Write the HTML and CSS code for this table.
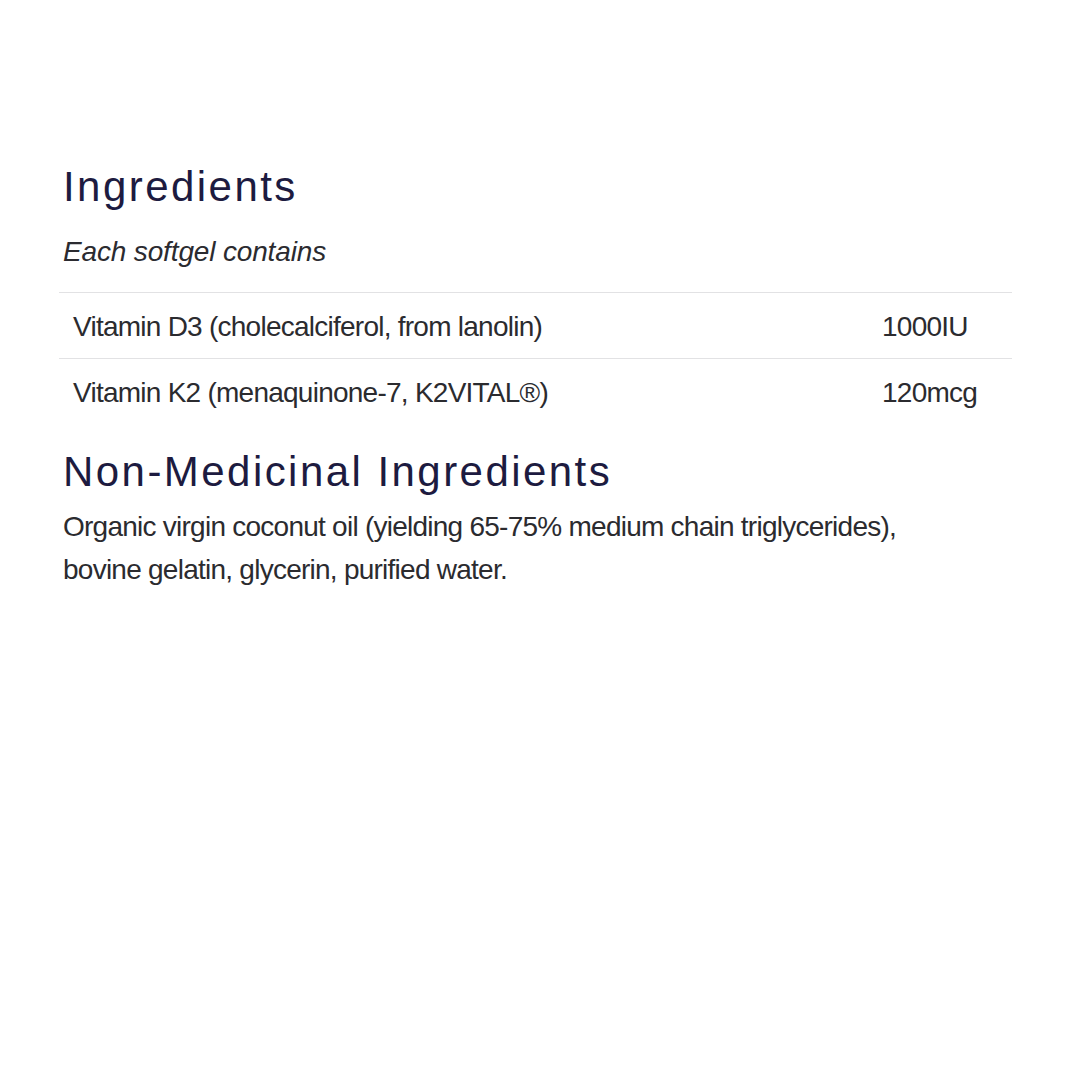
FILE: index.html
```html
<!DOCTYPE html>
<html lang="en">
<head>
<meta charset="utf-8">
<title>Ingredients</title>
<link rel="stylesheet" href="styles.css">
</head>
<body>
<main class="panel">
  <h1 class="heading heading-first">Ingredients</h1>
  <p class="subtitle">Each softgel contains</p>
  <div class="facts">
    <div class="fact-row">
      <span class="fact-name">Vitamin D3 (cholecalciferol, from lanolin)</span>
      <span class="fact-amount">1000IU</span>
    </div>
    <div class="fact-row">
      <span class="fact-name">Vitamin K2 (menaquinone-7, K2VITAL®)</span>
      <span class="fact-amount">120mcg</span>
    </div>
  </div>
  <h2 class="heading heading-second">Non-Medicinal Ingredients</h2>
  <p class="body-text">Organic virgin coconut oil (yielding 65-75% medium chain triglycerides),<br>bovine gelatin, glycerin, purified water.</p>
</main>
</body>
</html>
```

FILE: styles.css
```css
html, body {
  margin: 0;
  padding: 0;
  background: #ffffff;
}

body {
  width: 1080px;
  height: 1080px;
  font-family: "Liberation Sans", Arial, sans-serif;
  color: #2b2b2f;
}

.panel {
  padding: 162px 68px 0 59px;
}

.heading {
  margin: 0;
  padding-left: 4px;
  font-size: 42px;
  line-height: 50px;
  font-weight: 400;
  letter-spacing: 2.45px;
  color: #1d1b40;
}

.subtitle {
  margin: 20px 0 0;
  padding-left: 4px;
  font-size: 28px;
  line-height: 40px;
  font-style: italic;
  letter-spacing: -0.15px;
  color: #2b2b30;
}

.facts {
  margin-top: 20px;
}

.fact-row {
  display: grid;
  grid-template-columns: 1fr 130px;
  border-top: 1px solid #e2e2e4;
  padding-top: 4px;
  height: 61px;
  font-size: 28px;
  line-height: 60px;
  letter-spacing: -0.75px;
  color: #2b2b2f;
}

.fact-name {
  padding-left: 14px;
}

.heading-second {
  margin-top: 23px;
}

.body-text {
  margin: 8px 0 0;
  padding-left: 4px;
  font-size: 28px;
  line-height: 43px;
  letter-spacing: -0.75px;
  color: #2b2b2f;
}
```
